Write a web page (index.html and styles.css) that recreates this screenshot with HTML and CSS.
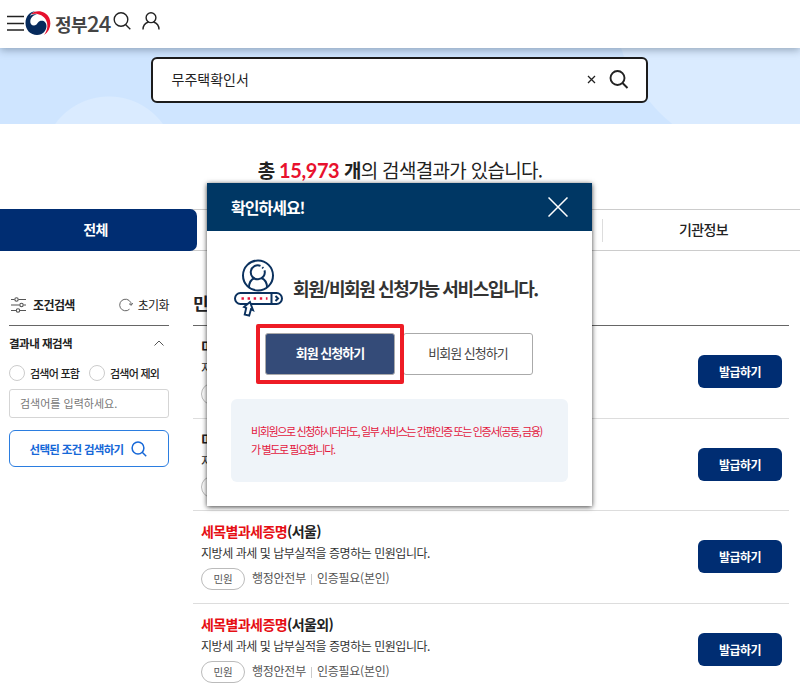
FILE: index.html
```html
<!DOCTYPE html>
<html lang="ko">

<head>
    <meta charset="UTF-8">
    <meta name="viewport" content="width=device-width, initial-scale=1.0">
    <title>정부24</title>
    <link rel="stylesheet" href="styles.css">
</head>

<body>
    <header class="header">
        <svg class="menu-icon" width="17" height="16" viewBox="0 0 17 16" stroke="#222" stroke-width="1.4">
            <path d="M0 1.5h17M0 8.5h17M0 15h17" />
        </svg>
        <svg class="logo-icon" width="26" height="26" viewBox="0 0 26 26">
            <path fill="#e60f2d" d="M5.500 4.500C11-1 21 1 24.300 8c2.500 6.500.500 13-5.300 17 3.500-5 4.500-10 2-15C18 4.500 11 2.500 5.500 4.500z" />
            <path fill="#062a5c" d="M11 1C4 1.500.500 7 .500 13c0 7 5 12 11.500 12 6 0 9.500-4.500 9.500-9 0-4-3-6-6-5.200-3 .7-3 4.700-6.500 4.700-2.500 0-4-2-3.700-4.500C5.800 7 9 4.500 12.500 4.500 8 3.500 6 5 5 6 6 3.500 8 2 11 1z" />
        </svg>
        <span class="logo-text">정부<span class="logo-num">24</span></span>
        <svg class="head-search" width="18" height="18" viewBox="0 0 18 18" fill="none" stroke="#222" stroke-width="1.4">
            <circle cx="8" cy="7.500" r="6.800" />
            <path d="M12.500 12.500l4.800 4.700" />
        </svg>
        <svg class="head-user" width="18" height="18" viewBox="0 0 18 18" fill="none" stroke="#222" stroke-width="1.4">
            <circle cx="9" cy="5.700" r="4.900" />
            <path d="M1 17.500c0-4 2.500-6.500 5.500-7.500M17 17.500c0-4-2.500-6.500-5.500-7.500" />
        </svg>
    </header>

    <section class="banner">
        <div class="search-box">
            <span class="search-text">무주택확인서</span>
            <svg width="9" height="9" viewBox="0 0 9 9" stroke="#222" stroke-width="1.3">
                <path d="M1 1l7 7M8 1L1 8" />
            </svg>
            <svg class="search-icon" width="20" height="19" viewBox="0 0 20 19" fill="none" stroke="#222" stroke-width="1.9">
                <circle cx="8.500" cy="8" r="7" />
                <path d="M13.500 13l5 5" />
            </svg>
        </div>
    </section>

    <h1 class="result-title"><b>총 <span class="count">15,973</span> 개</b>의 검색결과가 있습니다.</h1>

    <nav class="tabs">
        <div class="tab active">전체</div>
        <div class="tab-middle"></div>
        <div class="tab last">기관정보</div>
    </nav>

    <div class="content">
        <aside class="sidebar">
            <div class="filter-head">
                <svg width="15" height="16" viewBox="0 0 15 16" fill="none" stroke="#555" stroke-width="1.100">
                    <path d="M0 2.500h3.500M7.500 2.500H15M0 8h8.500M12.500 8H15M0 13.500h5M9 13.500h6" />
                    <circle cx="5.500" cy="2.500" r="1.700" />
                    <circle cx="10.500" cy="8" r="1.700" />
                    <circle cx="7" cy="13.500" r="1.700" />
                </svg>
                <strong>조건검색</strong>
                <svg class="reset-icon" width="14" height="14" viewBox="0 0 14 14" fill="none" stroke="#666">
                    <path d="M10.500 11.200A5.800 5.800 0 1 1 12.300 7M10 5.700l2.300 1.600 1.400-2.300" />
                </svg>
                <span>초기화</span>
            </div>
            <div class="filter-title">
                <strong>결과내 재검색</strong>
                <svg width="10" height="6" viewBox="0 0 10 6" fill="none" stroke="#555">
                    <path d="M.5 5.500L5 1l4.500 4.500" />
                </svg>
            </div>
            <div class="radio-row">
                <label><i class="radio"></i>검색어 포함</label>
                <label><i class="radio"></i>검색어 제외</label>
            </div>
            <div class="keyword">검색어를 입력하세요.</div>
            <button class="filter-button" type="button">
                <span>선택된 조건 검색하기</span>
                <svg width="16" height="16" viewBox="0 0 16 16" fill="none" stroke="#1668d8" stroke-width="1.500">
                    <circle cx="7" cy="7" r="5.900" />
                    <path d="M11.200 11.200l4 4" />
                </svg>
            </button>
        </aside>

        <main class="results">
            <h2>민원</h2>
            <div class="item">
                <div class="info">
                    <h3>미과</h3>
                    <p>지방</p>
                    <div class="meta"><span class="badge">민원</span></div>
                </div>
                <button class="issue" type="button">발급하기</button>
            </div>
            <div class="item">
                <div class="info">
                    <h3>미과</h3>
                    <p>지방</p>
                    <div class="meta"><span class="badge">민원</span></div>
                </div>
                <button class="issue" type="button">발급하기</button>
            </div>
            <div class="item">
                <div class="info">
                    <h3><em>세목별과세증명</em>(서울)</h3>
                    <p>지방세 과세 및 납부실적을 증명하는 민원입니다.</p>
                    <div class="meta"><span class="badge">민원</span><span class="dept">행정안전부</span><span>인증필요(본인)</span></div>
                </div>
                <button class="issue" type="button">발급하기</button>
            </div>
            <div class="item">
                <div class="info">
                    <h3><em>세목별과세증명</em>(서울외)</h3>
                    <p>지방세 과세 및 납부실적을 증명하는 민원입니다.</p>
                    <div class="meta"><span class="badge">민원</span><span class="dept">행정안전부</span><span>인증필요(본인)</span></div>
                </div>
                <button class="issue" type="button">발급하기</button>
            </div>
        </main>
    </div>

    <div class="modal">
        <div class="modal-head">
            <span>확인하세요!</span>
            <svg width="20" height="20" viewBox="0 0 20 20" stroke="#fff" stroke-width="1.500">
                <path d="M.5.500l19 19M19.500.500l-19 19" />
            </svg>
        </div>
        <div class="modal-body">
            <div class="modal-title">
                <svg width="49" height="58" viewBox="0 0 49 58" fill="none" stroke="#0b315e" stroke-width="2">
                    <circle cx="24" cy="16.500" r="15" />
                    <path d="M26.500 6.900a7 7 0 1 0 4 4.500" />
                    <path d="M28.300 8.300l1 1" />
                    <path d="M15 28.500c0-5 2-8 5.500-9.500M33 28.500c0-5-2-8-5.500-9.500" />
                    <rect x="1" y="34" width="47" height="11" rx="5.500" />
                    <path d="M37.500 34v11M41.500 37l2.500 2.500-2.500 2.500" />
                    <path d="M7.500 39.500h26" stroke="#e3173e" stroke-width="2.400" stroke-dasharray="2.400 3.700" />
                    <path fill="#fff" stroke-width="1.900" d="M16 43l-6 5 2.200 1-1.500 6.500 4.500 1.200 1.800-6.500 2 1z" />
                </svg>
                <strong>회원/비회원 신청가능 서비스입니다.</strong>
            </div>
            <div class="modal-buttons">
                <button class="member" type="button">회원 신청하기</button>
                <button class="guest" type="button">비회원 신청하기</button>
                <div class="highlight"></div>
            </div>
            <div class="notice">비회원으로 신청하시더라도, 일부 서비스는 간편인증 또는 인증서(공동, 금융)<br>가 별도로 필요합니다.</div>
        </div>
    </div>
</body>

</html>
```

FILE: styles.css
```css
* {
    box-sizing: border-box;
}

body {
    margin: 0;
    height: 685px;
    overflow: hidden;
    position: relative;
    background: #fff;
    color: #222;
    font-family: "Noto Sans CJK KR", sans-serif;
    font-size: 12px;
    letter-spacing: -0.05em;
}

button {
    font-family: inherit;
    letter-spacing: -0.05em;
    padding: 0;
}

svg {
    display: block;
    flex: none;
}

h1,
h2,
h3,
p {
    margin: 0;
}

.header {
    position: relative;
    display: flex;
    align-items: flex-start;
    height: 48px;
    padding-left: 7px;
    background: #fff;
    box-shadow: 0 2px 8px rgba(40, 60, 80, 0.4);
}

.menu-icon {
    margin-top: 15px;
}

.logo-icon {
    margin: 10px 0 0 1px;
}

.logo-text {
    margin-left: 4px;
    width: 58px;
    line-height: 44px;
    font-size: 18px;
    font-weight: 700;
    letter-spacing: -0.6px;
    color: #444;
    white-space: nowrap;
}

.logo-num {
    font-size: 22px;
    font-weight: 500;
}

.head-search {
    margin-top: 12px;
}

.head-user {
    margin: 12px 0 0 11px;
}

.banner {
    display: flex;
    justify-content: center;
    height: 76px;
    padding-top: 9px;
    background:
        radial-gradient(circle at 109px 115px, #daebff 66px, transparent 67px),
        radial-gradient(circle at 770px -45px, #daebff 155px, transparent 156px),
        #cfe5ff;
}

.search-box {
    display: flex;
    align-items: center;
    width: 497px;
    height: 46px;
    margin-right: 2px;
    padding: 0 17px 2px 19px;
    border: 2px solid #1c1c1c;
    border-radius: 6px;
    background: #fff;
}

.search-text {
    flex: 1;
    font-size: 14px;
    letter-spacing: 0;
}

.search-icon {
    margin-left: 13px;
}

.result-title {
    height: 85px;
    padding-top: 31px;
    line-height: 30px;
    text-align: center;
    font-size: 19px;
    font-weight: 400;
    letter-spacing: -0.7px;
}

.result-title b {
    font-weight: 700;
}

.count {
    color: #e8112d;
    font-family: Lato, sans-serif;
    font-size: 20px;
    letter-spacing: -0.4px;
}

.tabs {
    display: flex;
    height: 42px;
    line-height: 38px;
    border-top: 1px solid #ccc;
    border-bottom: 1px solid #ccc;
    font-size: 14px;
    font-weight: 500;
    text-align: center;
}

.tab.active {
    width: 197px;
    height: 42px;
    margin-top: -1px;
    padding-right: 6px;
    border-radius: 0 7px 7px 0;
    background: #002d72;
    color: #fff;
    font-weight: 700;
    line-height: 40px;
}

.tab-middle {
    flex: 1;
}

.tab.last {
    width: 198px;
    padding-left: 5px;
    background: linear-gradient(#ddd, #ddd) 0 50% / 1px 23px no-repeat;
}

.content {
    display: flex;
    gap: 24px;
    padding: 37px 11px 0 9px;
}

.sidebar {
    width: 160px;
}

.filter-head {
    display: flex;
    align-items: center;
    height: 38px;
    padding: 0 0 4px 2px;
    border-bottom: 1px solid #666;
}

.filter-head strong {
    margin-left: 7px;
}

.reset-icon {
    margin: 0 5px 0 auto;
}

.filter-title {
    display: flex;
    align-items: center;
    justify-content: space-between;
    height: 35px;
    padding: 0 5px 2px 0;
    font-size: 11.5px;
    letter-spacing: -0.5px;
}

.radio-row {
    display: flex;
    gap: 10px;
    height: 24px;
    font-size: 11px;
    font-weight: 500;
    letter-spacing: -0.75px;
}

.radio-row label {
    display: flex;
    align-items: center;
    width: 70px;
    white-space: nowrap;
}

.radio {
    width: 16px;
    height: 16px;
    margin-right: 5px;
    border: 1px solid #ccc;
    border-radius: 50%;
    flex: none;
}

.keyword {
    height: 29px;
    margin-top: 4px;
    padding-left: 10px;
    border: 1px solid #d5d5d5;
    border-radius: 3px;
    line-height: 26px;
    font-size: 11px;
    letter-spacing: 0;
    color: #777;
}

.filter-button {
    display: flex;
    align-items: center;
    justify-content: center;
    gap: 8px;
    width: 160px;
    height: 37px;
    margin-top: 12px;
    padding-right: 1px;
    border: 1px solid #2b7de0;
    border-radius: 6px;
    background: #fff;
    color: #1668d8;
    font-size: 11.5px;
    font-weight: 700;
    letter-spacing: -0.7px;
}

.results {
    flex: 1;
}

.results h2 {
    height: 38px;
    border-bottom: 1px solid #666;
    line-height: 30px;
    font-size: 17px;
}

.item {
    display: flex;
    justify-content: space-between;
    height: 92.7px;
    padding: 9px 7px 0 8px;
    border-bottom: 1px solid #ddd;
}

.info h3 {
    line-height: 23px;
    font-size: 14px;
    font-weight: 700;
}

.info em {
    font-style: normal;
    color: #e60f14;
}

.info p {
    line-height: 20px;
    letter-spacing: -0.46px;
    color: #333;
}

.meta {
    display: flex;
    align-items: center;
    height: 22px;
    margin-top: 5px;
    line-height: 20px;
    letter-spacing: -0.25px;
    color: #555;
}

.meta span {
    padding-bottom: 2px;
}

.badge {
    width: 44px;
    height: 22px;
    margin-right: 7px;
    border: 1px solid #bbb;
    border-radius: 11px;
    text-align: center;
    font-size: 10.5px;
}

.meta .dept {
    margin-right: 5px;
    padding-right: 6px;
    background: linear-gradient(#ccc, #ccc) 100% 50% / 1px 11px no-repeat;
}

.issue {
    width: 84px;
    height: 33px;
    margin-top: 20px;
    border: 0;
    border-radius: 6px;
    background: #002d72;
    color: #fff;
    font-size: 12px;
    font-weight: 700;
}

.modal {
    position: absolute;
    left: 207px;
    top: 183px;
    width: 385px;
    height: 323px;
    background: #fff;
    box-shadow: 0 1px 5px rgba(0, 0, 0, 0.75);
}

.modal-head {
    display: flex;
    align-items: center;
    justify-content: space-between;
    height: 48px;
    padding: 0 24px;
    background: #003764;
    color: #fff;
    font-size: 16px;
    font-weight: 700;
    letter-spacing: -1px;
}

.modal-body {
    padding: 28px 24px 0;
}

.modal-title {
    display: flex;
    align-items: center;
    gap: 10px;
    height: 58px;
    padding-left: 3px;
    font-size: 18px;
    letter-spacing: -1.4px;
    white-space: nowrap;
    color: #333;
}

.modal-buttons {
    position: relative;
    display: flex;
    gap: 8px;
    margin: 16px 0 0 34px;
}

.modal-buttons button {
    width: 130px;
    height: 42px;
    padding-bottom: 3px;
    border: 1px solid #aaa;
    border-radius: 3px;
    background: #fff;
    color: #444;
    font-size: 13px;
    letter-spacing: -1px;
}

.modal-buttons .member {
    background: #344b78;
    color: #fff;
    font-weight: 700;
}

.highlight {
    position: absolute;
    left: -9px;
    top: -9px;
    width: 148px;
    height: 60px;
    border: 4px solid #ee1c25;
    border-radius: 2px;
}

.notice {
    height: 83px;
    margin-top: 24px;
    padding: 23px 20px;
    border-radius: 6px;
    background: #eff4f9;
    color: #e3173e;
    font-size: 11px;
    line-height: 18px;
    letter-spacing: -1.38px;
    white-space: nowrap;
}
```
